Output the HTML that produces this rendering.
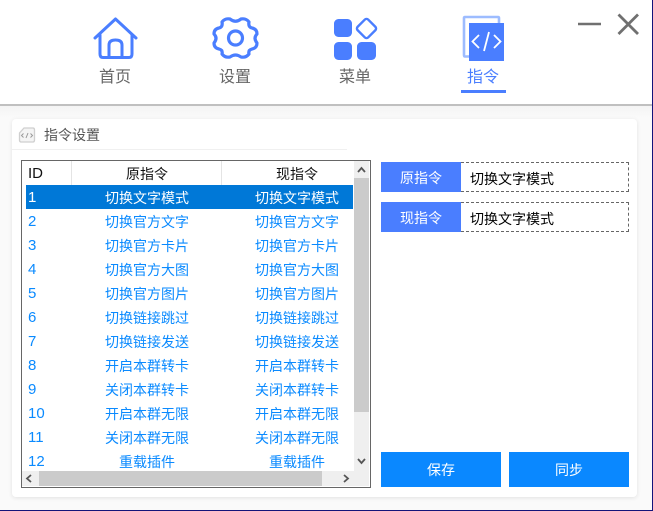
<!DOCTYPE html>
<html><head><meta charset="utf-8">
<style>
html,body{margin:0;padding:0}
body{width:653px;height:511px;overflow:hidden;background:#fff;position:relative;font-family:"Liberation Sans","Noto Sans CJK SC",sans-serif;font-size:14px}
.a{position:absolute}
.t{position:absolute;white-space:nowrap;text-align:center;line-height:20px}
.nav{font-size:16px;color:#666;width:60px;margin-top:1px}
.cell{color:#0a8aff}
.hd{color:#111}
.n{left:28px;font-size:15px;margin-top:1px}
.c1,.c2{width:150px;font-size:14px;margin-top:1px}
.c1{left:72px}
.c2{left:222px}
.btn{background:#0a88ff;color:#fff;text-align:center;line-height:37px;font-size:14px}
.lab{background:#4a7eff;color:#fff;text-align:center;line-height:33px;font-size:14px;width:80px;height:30px;left:381px}
.inp{left:461px;width:167px;height:28px;border:1px dashed #666;border-left:none;line-height:32px;padding-left:0;color:#000}
.inp span{margin-left:9px}
</style></head><body>
<div class="a" style="left:0;top:104px;width:653px;height:2px;background:#c0c0c0"></div>
<div class="a" style="left:0;top:106px;width:652px;height:404px;background:linear-gradient(#f4f4f4,#fafafa 12px)"></div>
<div class="a" style="left:12px;top:119px;width:625px;height:378px;background:#fff;border-radius:4px;box-shadow:0 1px 4px rgba(0,0,0,.1)"></div>
<div class="a" style="left:652px;top:0;width:1px;height:511px;background:#14147a"></div>
<div class="a" style="left:0;top:510px;width:653px;height:1px;background:#14147a"></div>

<!-- nav icons -->
<svg class="a" style="left:92px;top:16px" width="48" height="44" viewBox="0 0 48 44" fill="none" stroke="#4a7eff" stroke-width="3" stroke-linejoin="round" stroke-linecap="round">
<path d="M3 22 L23.500 3 L44 22 M8 19 V38 Q8 41.500 11 41.500 H37 Q40 41.500 40 38 V19"/>
<path d="M17 41 V29 Q17 24 23.500 24 Q30 24 30 29 V41"/>
</svg>
<svg class="a" style="left:212px;top:16px" width="48" height="44" viewBox="0 0 48 44" fill="none" stroke="#4a7eff" stroke-width="3.200" stroke-linejoin="round">
<path d="M18 3 Q23.500 7.500 29 3 Q34 2 37 6 Q36 11 40 12 Q45 13 45 18 Q41 22 45 27 Q45 32 40 33 Q36 34 37 38 Q34 42 29 41 Q23.500 37 18 41 Q13 42 10 38 Q11 34 7 33 Q2 32 2 27 Q6 22 2 18 Q2 13 7 12 Q11 11 10 6 Q13 2 18 3 Z"/>
<circle cx="23.500" cy="22" r="7"/>
</svg>
<svg class="a" style="left:330px;top:14px" width="50" height="48" viewBox="0 0 50 48">
<rect x="4" y="5" width="18" height="18" rx="4.500" fill="#4a7eff"/>
<rect x="4" y="28" width="18" height="18" rx="4.500" fill="#4a7eff"/>
<rect x="27" y="28" width="19" height="18" rx="4.500" fill="#4a7eff"/>
<rect x="29" y="7" width="15" height="15" rx="2.500" fill="none" stroke="#4a7eff" stroke-width="2.400" transform="rotate(45 36.500 14.500)"/>
</svg>
<svg class="a" style="left:460px;top:14px" width="50" height="48" viewBox="0 0 50 48">
<path d="M9 42.500 H5 Q4 42.500 4 41 V4 Q4 3 5 3 H38 Q39 3 39 4 V9" fill="none" stroke="#9dbcff" stroke-width="2.600"/>
<rect x="9" y="9" width="35" height="38" fill="#4a7eff"/>
<path d="M19 21 L12.500 27.500 L19 34 M34 21 L40.500 27.500 L34 34 M29 18 L24 37" fill="none" stroke="#fff" stroke-width="1.800"/>
</svg>
<div class="t nav" style="left:85px;top:67px">首页</div>
<div class="t nav" style="left:205px;top:67px">设置</div>
<div class="t nav" style="left:325px;top:67px">菜单</div>
<div class="t nav" style="left:453px;top:67px;color:#4a7eff">指令</div>
<div class="a" style="left:461px;top:90px;width:45px;height:3px;background:#4a7eff"></div>

<svg class="a" style="left:575px;top:10px" width="70" height="28" viewBox="0 0 70 28" fill="none" stroke="#707070">
<path d="M3 14 H26" stroke-width="2.500"/>
<path d="M43.500 4.500 L63 24 M63 4.500 L43.500 24" stroke-width="2.800"/>
</svg>

<!-- panel title -->
<svg class="a" style="left:18px;top:126px" width="18" height="18" viewBox="0 0 18 18">
<path d="M6 2 H15 Q16.500 2 16.500 4 V14 Q16.500 16 15 16 H3 Q1.500 16 1.500 14 V7 Z" fill="#f4f4f4" stroke="#cfcfcf" stroke-width="1.300"/>
<path d="M5.500 7.500 L3.500 9.500 L5.500 11.500 M12.500 7.500 L14.500 9.500 L12.500 11.500 M10 7 L8 12" fill="none" stroke="#999" stroke-width="1"/>
</svg>
<div class="t" style="left:44px;top:125px;font-size:14px;color:#555">指令设置</div>
<div class="a" style="left:12px;top:149px;width:335px;height:1px;background:#f0f0f0"></div>

<!-- table -->
<div class="a" style="left:21px;top:160px;width:348px;height:326px;border:1px solid #666;background:#fff;overflow:hidden"></div>
<div class="a" style="left:71px;top:161px;width:1px;height:24px;background:#e4e4e4"></div>
<div class="a" style="left:221px;top:161px;width:1px;height:24px;background:#e4e4e4"></div>
<div class="t hd" style="left:28px;top:164px;font-size:15px">ID</div>
<div class="t hd" style="left:72px;top:164px;width:150px;text-align:center">原指令</div>
<div class="t hd" style="left:222px;top:164px;width:150px;text-align:center">现指令</div>
<div class="a" style="left:26px;top:185px;width:327px;height:24px;background:#0078d7"></div>
<div class="t n" style="top:187px;color:#fff">1</div>
<div class="t c1" style="top:187px;color:#fff">切换文字模式</div>
<div class="t c2" style="top:187px;color:#fff">切换文字模式</div>

<div class="t cell n" style="top:211px">2</div><div class="t cell c1" style="top:211px">切换官方文字</div><div class="t cell c2" style="top:211px">切换官方文字</div>
<div class="t cell n" style="top:235px">3</div><div class="t cell c1" style="top:235px">切换官方卡片</div><div class="t cell c2" style="top:235px">切换官方卡片</div>
<div class="t cell n" style="top:259px">4</div><div class="t cell c1" style="top:259px">切换官方大图</div><div class="t cell c2" style="top:259px">切换官方大图</div>
<div class="t cell n" style="top:283px">5</div><div class="t cell c1" style="top:283px">切换官方图片</div><div class="t cell c2" style="top:283px">切换官方图片</div>
<div class="t cell n" style="top:307px">6</div><div class="t cell c1" style="top:307px">切换链接跳过</div><div class="t cell c2" style="top:307px">切换链接跳过</div>
<div class="t cell n" style="top:331px">7</div><div class="t cell c1" style="top:331px">切换链接发送</div><div class="t cell c2" style="top:331px">切换链接发送</div>
<div class="t cell n" style="top:355px">8</div><div class="t cell c1" style="top:355px">开启本群转卡</div><div class="t cell c2" style="top:355px">开启本群转卡</div>
<div class="t cell n" style="top:379px">9</div><div class="t cell c1" style="top:379px">关闭本群转卡</div><div class="t cell c2" style="top:379px">关闭本群转卡</div>
<div class="t cell n" style="top:403px">10</div><div class="t cell c1" style="top:403px">开启本群无限</div><div class="t cell c2" style="top:403px">开启本群无限</div>
<div class="t cell n" style="top:427px">11</div><div class="t cell c1" style="top:427px">关闭本群无限</div><div class="t cell c2" style="top:427px">关闭本群无限</div>
<div class="t cell n" style="top:451px">12</div><div class="t cell c1" style="top:451px">重载插件</div><div class="t cell c2" style="top:451px">重载插件</div>

<!-- scrollbars -->
<div class="a" style="left:354px;top:161px;width:15px;height:325px;background:#efefef"></div>
<div class="a" style="left:22px;top:471px;width:347px;height:15px;background:#efefef"></div>
<div class="a" style="left:354px;top:178px;width:15px;height:234px;background:#cbcbcb"></div>
<div class="a" style="left:39px;top:471px;width:283px;height:15px;background:#cbcbcb"></div>
<svg class="a" style="left:22px;top:161px" width="348" height="326" viewBox="0 0 348 326" fill="none" stroke="#555" stroke-width="1.800">
<path d="M336 11 L339.500 7 L343 11"/>
<path d="M336 298 L339.500 302 L343 298"/>
<path d="M9 314 L5 317.500 L9 321"/>
<path d="M322 314 L326 317.500 L322 321"/>
</svg>

<!-- right fields -->
<div class="a lab" style="top:162px">原指令</div>
<div class="a inp" style="top:162px"><span>切换文字模式</span></div>
<div class="a lab" style="top:202px">现指令</div>
<div class="a inp" style="top:202px"><span>切换文字模式</span></div>
<div class="a btn" style="left:381px;top:452px;width:120px;height:35px">保存</div>
<div class="a btn" style="left:509px;top:452px;width:120px;height:35px">同步</div>
</body></html>
